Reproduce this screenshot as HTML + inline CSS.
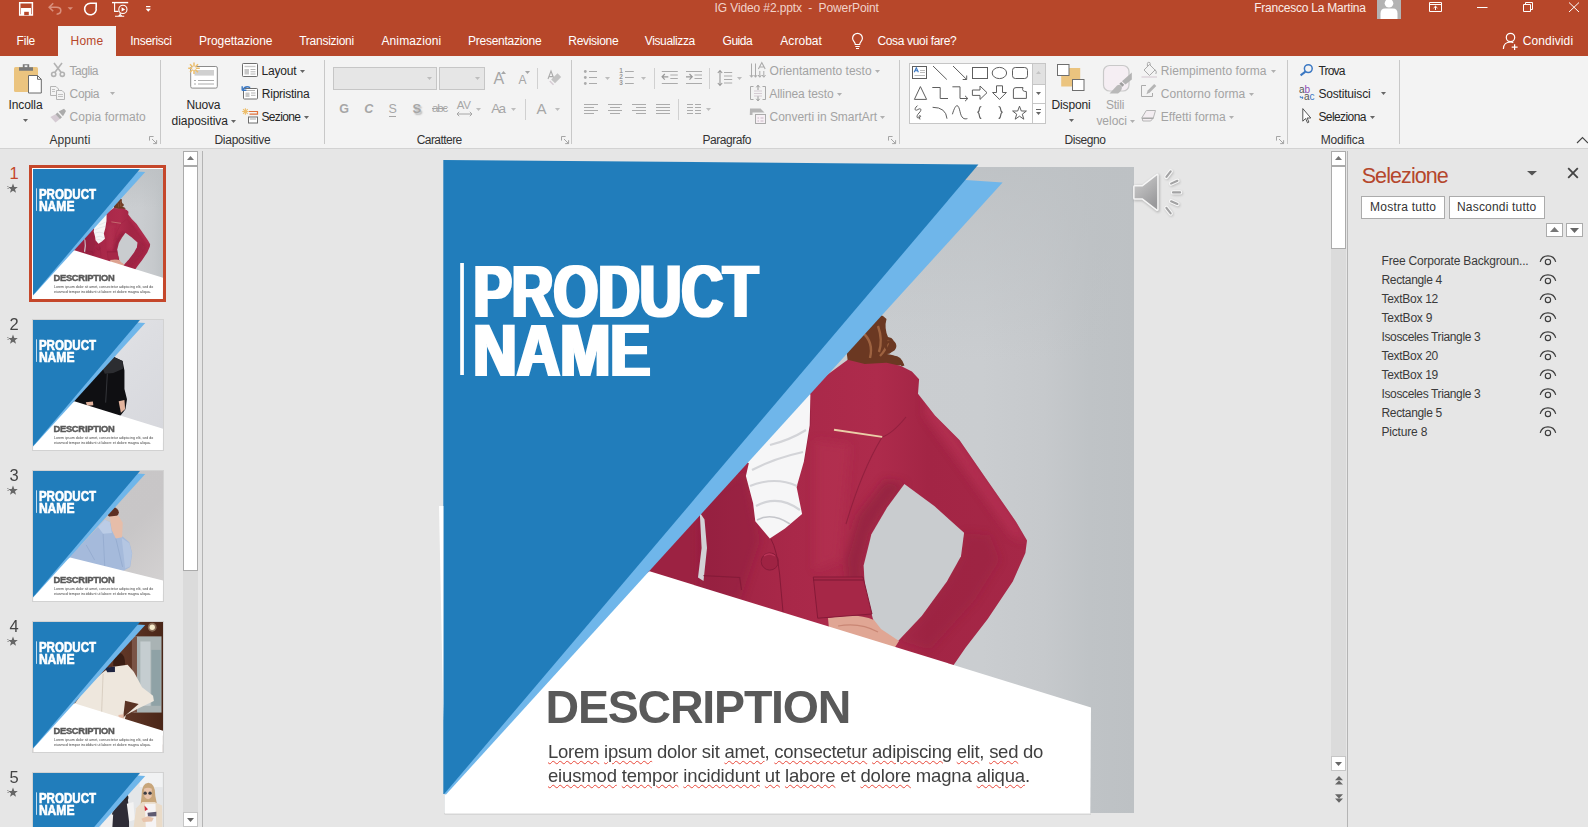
<!DOCTYPE html><html lang="it"><head><meta charset="utf-8"><title>IG Video #2.pptx - PowerPoint</title><style>
html,body{margin:0;padding:0}
body{width:1588px;height:827px;overflow:hidden;background:#E6E6E6;position:relative;font-family:"Liberation Sans",sans-serif}
.a{position:absolute;display:block}
.t{position:absolute;white-space:nowrap;line-height:1;display:block}
svg{overflow:visible}
</style></head><body>
<div class="a" style="left:0px;top:0px;width:1588px;height:56px;background:#B7472A;"></div>
<div class="a" style="left:58px;top:26px;width:58px;height:30px;background:#F3F3F3;"></div>
<span class="t" style="left:16.60px;top:35.02px;font-size:12px;color:#FFFFFF;letter-spacing:-0.212px;">File</span>
<span class="t" style="left:130.30px;top:35.02px;font-size:12px;color:#FFFFFF;letter-spacing:-0.301px;">Inserisci</span>
<span class="t" style="left:199.00px;top:35.02px;font-size:12px;color:#FFFFFF;letter-spacing:-0.046px;">Progettazione</span>
<span class="t" style="left:299.20px;top:35.02px;font-size:12px;color:#FFFFFF;letter-spacing:-0.257px;">Transizioni</span>
<span class="t" style="left:381.40px;top:35.02px;font-size:12px;color:#FFFFFF;letter-spacing:0.134px;">Animazioni</span>
<span class="t" style="left:468.00px;top:35.02px;font-size:12px;color:#FFFFFF;letter-spacing:-0.260px;">Presentazione</span>
<span class="t" style="left:568.30px;top:35.02px;font-size:12px;color:#FFFFFF;letter-spacing:-0.299px;">Revisione</span>
<span class="t" style="left:644.80px;top:35.02px;font-size:12px;color:#FFFFFF;letter-spacing:-0.379px;">Visualizza</span>
<span class="t" style="left:722.50px;top:35.02px;font-size:12px;color:#FFFFFF;letter-spacing:-0.455px;">Guida</span>
<span class="t" style="left:780.30px;top:35.02px;font-size:12px;color:#FFFFFF;letter-spacing:0.041px;">Acrobat</span>
<span class="t" style="left:877.40px;top:35.02px;font-size:12px;color:#FFFFFF;letter-spacing:-0.332px;">Cosa vuoi fare?</span>
<span class="t" style="left:1522.70px;top:35.02px;font-size:12px;color:#FFFFFF;letter-spacing:0.130px;">Condividi</span>
<span class="t" style="left:70.50px;top:35.02px;font-size:12px;color:#B7472A;letter-spacing:0.263px;">Home</span>
<span class="t" style="left:714.60px;top:2.02px;font-size:12px;color:#F1D3CA;letter-spacing:-0.119px;white-space:pre;">IG Video #2.pptx  -  PowerPoint</span>
<span class="t" style="left:1254.20px;top:2.02px;font-size:12px;color:#FBEDE8;letter-spacing:-0.224px;">Francesco La Martina</span>
<svg class="a" style="left:1377px;top:0" width="24" height="19" viewBox="0 0 24 19"><rect width="24" height="19" fill="#B3B3B3"/><circle cx="12" cy="3.2" r="4.3" fill="#fff"/><path d="M3.5 19V13.5Q3.5 8.6 8 8.6H16Q20.5 8.6 20.5 13.5V19Z" fill="#fff"/></svg>
<svg class="a" style="left:0;top:0" width="200" height="26" viewBox="0 0 200 26" fill="none" stroke="#fff" stroke-width="1.3">
<path d="M19.7 2.8H32.4V15H19.7Z" stroke-width="1.5"/><rect x="21" y="8" width="10" height="7" fill="#fff" stroke="none"/><rect x="24.2" y="11.8" width="4.6" height="3.4" fill="#B7472A" stroke="none"/><rect x="20.4" y="11.6" width="2" height="2.8" fill="#B7472A" stroke="none" opacity="0"/>
<g stroke="#D98F7C"><path d="M53.2 3.2L49.2 7.2L53.2 11.2M49.6 7.2H56.6Q60.8 7.2 60.8 10.6Q60.8 14 56.6 14.2" stroke-width="1.6"/><path d="M67.6 7.2H73L70.3 10Z" fill="#D98F7C" stroke="none"/></g>
<path d="M96 7.4A5.8 5.8 0 1 1 90.5 3.2H96.2V7.6" stroke-width="1.6"/>
<path d="M112 2.6H128.2" stroke-width="1.4"/><path d="M114.6 3V11.4H118.6M120.2 12V15.6M115 16.3H124.2M118.6 16.2L120.2 14.6L121.8 16.2" stroke-width="1.1"/><circle cx="122.9" cy="9.4" r="4.1" stroke-width="1.1" fill="#B7472A"/><path d="M121.6 7.2V11.6L125.2 9.4Z" fill="#fff" stroke="none"/>
<path d="M146 6.6H150.4" stroke-width="1.2"/><path d="M145.7 8.7H150.9L148.3 11.8Z" fill="#fff" stroke="none"/>
</svg>
<svg class="a" style="left:1420px;top:0" width="168" height="20" viewBox="1420 0 168 20" fill="none" stroke="#fff" stroke-width="1">
<path d="M1429.5 2.5H1441.5V11.5H1429.5ZM1429.5 4.5H1441.5"/><path d="M1435.5 10V6.3M1433.6 8L1435.5 6.2L1437.4 8"/>
<path d="M1477 7.5H1487.5"/>
<path d="M1523.5 4.5H1530.5V11.5H1523.5ZM1525.5 4.5V2.5H1532.5V9.5H1530.5"/>
<path d="M1569 2.5L1579 12M1579 2.5L1569 12"/>
</svg>
<svg class="a" style="left:850px;top:31px" width="16" height="20" viewBox="850 31 16 20" fill="none" stroke="#fff" stroke-width="1.2">
<path d="M1 1" /><path d="M855.3 44.5C855.3 42 852.6 41.2 852.6 38.2A4.9 4.9 0 0 1 862.4 38.2C862.4 41.2 859.7 42 859.7 44.5Z"/><path d="M855.3 46.5H859.7M856 48.5H859"/></svg>
<svg class="a" style="left:1500px;top:30px" width="20" height="22" viewBox="1500 30 20 22" fill="none" stroke="#fff" stroke-width="1.2">
<circle cx="1510.5" cy="37.5" r="4.2"/><path d="M1503.4 49C1503.4 44.5 1506.5 42 1510.5 42C1511.5 42 1512.5 42.2 1513.3 42.6"/><path d="M1514.6 44.2V50M1511.7 47.1H1517.6"/></svg>
<div class="a" style="left:0px;top:56px;width:1588px;height:92px;background:#F3F3F3;"></div>
<div class="a" style="left:0px;top:148px;width:1588px;height:1px;background:#D2D2D2;"></div>
<div class="a" style="left:160px;top:60px;width:1px;height:84px;background:#C8C8C8;"></div>
<div class="a" style="left:324px;top:60px;width:1px;height:84px;background:#C8C8C8;"></div>
<div class="a" style="left:571px;top:60px;width:1px;height:84px;background:#C8C8C8;"></div>
<div class="a" style="left:899px;top:60px;width:1px;height:84px;background:#C8C8C8;"></div>
<div class="a" style="left:1287px;top:60px;width:1px;height:84px;background:#C8C8C8;"></div>
<div class="a" style="left:1399px;top:60px;width:1px;height:84px;background:#C8C8C8;"></div>
<div class="a" style="left:537px;top:68px;width:1px;height:21px;background:#D0D0D0;"></div>
<div class="a" style="left:654px;top:68px;width:1px;height:21px;background:#D0D0D0;"></div>
<div class="a" style="left:709px;top:68px;width:1px;height:21px;background:#D0D0D0;"></div>
<div class="a" style="left:525px;top:99px;width:1px;height:21px;background:#D0D0D0;"></div>
<div class="a" style="left:678px;top:99px;width:1px;height:21px;background:#D0D0D0;"></div>
<span class="t" style="left:49.40px;top:134.02px;font-size:12px;color:#333;letter-spacing:0.050px;">Appunti</span>
<span class="t" style="left:214.40px;top:134.02px;font-size:12px;color:#333;letter-spacing:-0.249px;">Diapositive</span>
<span class="t" style="left:416.70px;top:134.02px;font-size:12px;color:#333;letter-spacing:-0.553px;">Carattere</span>
<span class="t" style="left:702.60px;top:134.02px;font-size:12px;color:#333;letter-spacing:-0.475px;">Paragrafo</span>
<span class="t" style="left:1064.60px;top:134.02px;font-size:12px;color:#333;letter-spacing:-0.438px;">Disegno</span>
<span class="t" style="left:1320.70px;top:134.02px;font-size:12px;color:#333;letter-spacing:-0.141px;">Modifica</span>
<svg class="a" style="left:149px;top:136px" width="9" height="9" viewBox="0 0 9 9" fill="none" stroke="#9C9C9C" stroke-width="0.9"><path d="M0.5 4.6V0.5H4.6M3 3L7.4 7.4M7.6 4.2V7.6H4.2"/></svg>
<svg class="a" style="left:560.5px;top:136px" width="9" height="9" viewBox="0 0 9 9" fill="none" stroke="#9C9C9C" stroke-width="0.9"><path d="M0.5 4.6V0.5H4.6M3 3L7.4 7.4M7.6 4.2V7.6H4.2"/></svg>
<svg class="a" style="left:888px;top:136px" width="9" height="9" viewBox="0 0 9 9" fill="none" stroke="#9C9C9C" stroke-width="0.9"><path d="M0.5 4.6V0.5H4.6M3 3L7.4 7.4M7.6 4.2V7.6H4.2"/></svg>
<svg class="a" style="left:1276px;top:136px" width="9" height="9" viewBox="0 0 9 9" fill="none" stroke="#9C9C9C" stroke-width="0.9"><path d="M0.5 4.6V0.5H4.6M3 3L7.4 7.4M7.6 4.2V7.6H4.2"/></svg>
<svg class="a" style="left:1576px;top:136px" width="12" height="8" viewBox="0 0 12 8" fill="none" stroke="#444" stroke-width="1.1"><path d="M1 7L6.5 1.5L12 7"/></svg>
<span class="t" style="left:8.60px;top:99.02px;font-size:12px;color:#262626;letter-spacing:-0.115px;">Incolla</span>
<svg class="a" style="left:23px;top:119px" width="5" height="3" viewBox="0 0 5 3"><path d="M0 0H5L2.5 3Z" fill="#666"/></svg>
<span class="t" style="left:69.60px;top:65.02px;font-size:12px;color:#A3A3A3;letter-spacing:-0.491px;">Taglia</span>
<span class="t" style="left:69.60px;top:88.02px;font-size:12px;color:#A3A3A3;letter-spacing:-0.363px;">Copia</span>
<svg class="a" style="left:110px;top:92px" width="5" height="3" viewBox="0 0 5 3"><path d="M0 0H5L2.5 3Z" fill="#B0B0B0"/></svg>
<span class="t" style="left:69.60px;top:111.02px;font-size:12px;color:#A3A3A3;letter-spacing:0.069px;">Copia formato</span>
<svg class="a" style="left:10px;top:60px" width="36" height="36" viewBox="10 60 36 36">
<rect x="14" y="67" width="24" height="25" rx="1.5" fill="#EBC47F"/>
<path d="M19 70.7V67.2H22.8V64.3H29.2V67.2H33V70.7Z" fill="#797979"/><rect x="24.6" y="65.3" width="2.8" height="1.8" fill="#F3F3F3"/>
<path d="M28.5 75.5H37.5L41.3 79.3V93H28.5Z" fill="#fff" stroke="#6a6a6a" stroke-width="1"/><path d="M37.5 75.5V79.3H41.3" fill="none" stroke="#6a6a6a" stroke-width="1"/></svg>
<svg class="a" style="left:50px;top:61px" width="17" height="17" viewBox="50 61 17 17" fill="none" stroke="#B2B2B2" stroke-width="1.6">
<path d="M54 63L61.2 72.6M62 63L54.8 72.6"/><circle cx="53.7" cy="74.3" r="2.1"/><circle cx="62.3" cy="74.3" r="2.1"/></svg>
<svg class="a" style="left:49px;top:84px" width="18" height="18" viewBox="49 84 18 18" fill="#F3F3F3" stroke="#B4B4B4" stroke-width="1">
<path d="M50.5 86.5H56L58.5 89V95.5H50.5Z"/><path d="M56.5 90.5H62L64.5 93V99.5H56.5Z"/><path d="M52 89.5H55M52 91.5H55M58 94.5H63M58 96.5H63" stroke-width="0.8"/></svg>
<svg class="a" style="left:50px;top:108px" width="17" height="16" viewBox="50 108 17 16">
<path d="M50.4 117L56 114L60.5 118.5L55.5 122.6Z" fill="#D5CBD3"/><path d="M57.5 112.5L62 117.3L60 119L55.6 114.2Z" fill="#ABABAB"/><path d="M58.6 111.6L64 108.8L66 111L63 116.2Z" fill="#ABABAB"/></svg>
<span class="t" style="left:186.40px;top:99.02px;font-size:12px;color:#262626;letter-spacing:-0.147px;">Nuova</span>
<span class="t" style="left:171.60px;top:115.02px;font-size:12px;color:#262626;letter-spacing:-0.030px;">diapositiva</span>
<svg class="a" style="left:231px;top:119.5px" width="5" height="3" viewBox="0 0 5 3"><path d="M0 0H5L2.5 3Z" fill="#666"/></svg>
<span class="t" style="left:261.40px;top:65.02px;font-size:12px;color:#262626;letter-spacing:-0.166px;">Layout</span>
<svg class="a" style="left:300px;top:69.5px" width="5" height="3" viewBox="0 0 5 3"><path d="M0 0H5L2.5 3Z" fill="#666"/></svg>
<span class="t" style="left:261.80px;top:88.02px;font-size:12px;color:#262626;letter-spacing:-0.246px;">Ripristina</span>
<span class="t" style="left:261.40px;top:111.02px;font-size:12px;color:#262626;letter-spacing:-0.628px;">Sezione</span>
<svg class="a" style="left:304.3px;top:115.5px" width="5" height="3" viewBox="0 0 5 3"><path d="M0 0H5L2.5 3Z" fill="#666"/></svg>
<svg class="a" style="left:186px;top:60px" width="34" height="30" viewBox="186 60 34 30">
<rect x="190.7" y="66.5" width="26.6" height="21.6" rx="1.5" fill="#fff" stroke="#8C8C8C" stroke-width="1"/>
<rect x="194.5" y="70" width="19.5" height="5.6" fill="#D0D0D0"/><path d="M194 80.5H196M198 80.5H214M194 84H196M198 84H214" stroke="#ABABAB" stroke-width="1"/>
<g stroke="#EDBE6B" stroke-width="1.5"><path d="M194 62.5V74M188.2 68.2H199.8M190 64.2L198 72.2M198 64.2L190 72.2"/></g><circle cx="194" cy="68.2" r="1.9" fill="#F3F3F3"/></svg>
<svg class="a" style="left:241px;top:62px" width="18" height="16" viewBox="241 62 18 16">
<rect x="242.5" y="63.5" width="15" height="13" rx="0.8" fill="#fff" stroke="#6E6E6E"/><path d="M244.5 66.5H255.5" stroke="#C8C8C8" stroke-width="1.4"/><rect x="244.5" y="69" width="4.5" height="5.5" fill="#C8C8C8"/><path d="M250.5 69.5H255.5M250.5 71.8H255.5M250.5 74H255.5" stroke="#ABABAB" stroke-width="0.9"/></svg>
<svg class="a" style="left:241px;top:84px" width="18" height="17" viewBox="241 84 18 17">
<rect x="243.5" y="88.5" width="14" height="10.5" rx="0.8" fill="#fff" stroke="#6E6E6E"/><rect x="245.5" y="92.5" width="4" height="4.5" fill="#C8C8C8"/><path d="M251 93H255.5M251 95.3H255.5M246 90.5H255" stroke="#ABABAB" stroke-width="0.9"/>
<path d="M242.2 90.5V86.3M242.2 90.3H246.4" stroke="#3B78C3" stroke-width="1.4" fill="none"/><path d="M242.8 89.8Q245.5 85.3 250.2 87.6" stroke="#3B78C3" stroke-width="1.5" fill="none"/><rect x="246.5" y="86" width="6" height="2.3" fill="#F3F3F3" opacity="0"/></svg>
<svg class="a" style="left:241px;top:107px" width="18" height="18" viewBox="241 107 18 18">
<g stroke="#EDBE6B" stroke-width="1.1"><path d="M245.4 108.3V114.7M242.2 111.5H248.6M243.1 109.2L247.7 113.8M247.7 109.2L243.1 113.8"/></g>
<path d="M249 111.5H257.5V114.2H249.5" fill="none" stroke="#E0723C" stroke-width="1.2"/>
<rect x="248.5" y="117" width="9" height="6" fill="#fff" stroke="#6E6E6E"/><path d="M250 119H256" stroke="#C8C8C8" stroke-width="1.6"/></svg>
<div class="a" style="left:333px;top:67px;width:103.5px;height:22.5px;background:#E6E6E6;border:1px solid #C6C6C6;box-sizing:border-box;"></div>
<div class="a" style="left:439px;top:67px;width:46px;height:22.5px;background:#E6E6E6;border:1px solid #C6C6C6;box-sizing:border-box;"></div>
<svg class="a" style="left:427px;top:77px" width="5" height="3" viewBox="0 0 5 3"><path d="M0 0H5L2.5 3Z" fill="#BDBDBD"/></svg>
<svg class="a" style="left:475px;top:77px" width="5" height="3" viewBox="0 0 5 3"><path d="M0 0H5L2.5 3Z" fill="#BDBDBD"/></svg>
<span class="t" style="left:493.50px;top:70.52px;font-size:16px;color:#A6A6A6;letter-spacing:0.328px;">A</span>
<svg class="a" style="left:501px;top:70.5px" width="5" height="3"><path d="M0 3H5L2.5 0Z" fill="#A6A6A6"/></svg>
<span class="t" style="left:518.60px;top:74.02px;font-size:12px;color:#A6A6A6;letter-spacing:-0.304px;">A</span>
<svg class="a" style="left:525px;top:71px" width="5" height="3" viewBox="0 0 5 3"><path d="M0 0H5L2.5 3Z" fill="#A6A6A6"/></svg>
<svg class="a" style="left:546px;top:69px" width="17" height="18" viewBox="546 69 17 18">
<path d="M548 79L551 71L554 79M549 76.6H553" fill="none" stroke="#ABABAB" stroke-width="1.1"/><path d="M557.5 73.2L561.2 77L555 83.2L551.2 79.5Z" fill="#C3C3C3"/><path d="M550.3 80.6L554 84.3L553 85.3L549.3 81.6Z" fill="#D5CBD3"/></svg>
<span class="t" style="left:339.30px;top:102.77px;font-size:12.5px;color:#A6A6A6;letter-spacing:-1.023px;font-weight:bold;">G</span>
<span class="t" style="left:364.30px;top:102.77px;font-size:12.5px;color:#A6A6A6;letter-spacing:-0.927px;font-weight:bold;font-style:italic;">C</span>
<span class="t" style="left:388.60px;top:102.77px;font-size:12.5px;color:#A6A6A6;letter-spacing:-1.338px;border-bottom:1px solid #A6A6A6;padding-bottom:0.5px;">S</span>
<span class="t" style="left:412.60px;top:102.02px;font-size:13px;color:#A6A6A6;letter-spacing:-0.771px;font-weight:bold;text-shadow:1.5px 1.5px 1.5px #bbb;">S</span>
<span class="t" style="left:432.00px;top:103.27px;font-size:11.5px;color:#A6A6A6;letter-spacing:-1.171px;text-decoration:line-through;">abc</span>
<span class="t" style="left:456.70px;top:100.27px;font-size:11.5px;color:#A6A6A6;letter-spacing:-0.187px;">AV</span>
<svg class="a" style="left:456px;top:111px" width="17" height="6" viewBox="0 0 17 6" fill="none" stroke="#A6A6A6" stroke-width="1"><path d="M1 3H16M3.2 0.8L1 3L3.2 5.2M13.8 0.8L16 3L13.8 5.2"/></svg>
<svg class="a" style="left:476px;top:108px" width="5" height="3" viewBox="0 0 5 3"><path d="M0 0H5L2.5 3Z" fill="#BDBDBD"/></svg>
<span class="t" style="left:491.30px;top:101.77px;font-size:13.5px;color:#A6A6A6;letter-spacing:-1.713px;">Aa</span>
<svg class="a" style="left:511px;top:108px" width="5" height="3" viewBox="0 0 5 3"><path d="M0 0H5L2.5 3Z" fill="#BDBDBD"/></svg>
<span class="t" style="left:536.50px;top:101.02px;font-size:15px;color:#A6A6A6;letter-spacing:-0.505px;">A</span>
<svg class="a" style="left:555px;top:108px" width="5" height="3" viewBox="0 0 5 3"><path d="M0 0H5L2.5 3Z" fill="#BDBDBD"/></svg>
<svg class="a" style="left:580px;top:60px" width="170" height="66" viewBox="580 60 170 66"><circle cx="585.3" cy="71.5" r="1.4" fill="#ABABAB"/><path d="M589 71.5H597" stroke="#ABABAB" stroke-width="1"/><circle cx="585.3" cy="77.5" r="1.4" fill="#ABABAB"/><path d="M589 77.5H597" stroke="#ABABAB" stroke-width="1"/><circle cx="585.3" cy="83.5" r="1.4" fill="#ABABAB"/><path d="M589 83.5H597" stroke="#ABABAB" stroke-width="1"/><path d="M625 71.5H633.8" stroke="#ABABAB" stroke-width="1"/><path d="M625 77.5H633.8" stroke="#ABABAB" stroke-width="1"/><path d="M625 83.5H633.8" stroke="#ABABAB" stroke-width="1"/></svg>
<span class="t" style="left:619.30px;top:68.27px;font-size:6.5px;color:#999;letter-spacing:0.000px;font-weight:bold;">1</span>
<span class="t" style="left:619.30px;top:74.27px;font-size:6.5px;color:#999;letter-spacing:0.000px;font-weight:bold;">2</span>
<span class="t" style="left:619.30px;top:80.27px;font-size:6.5px;color:#999;letter-spacing:0.000px;font-weight:bold;">3</span>
<svg class="a" style="left:605px;top:77px" width="5" height="3" viewBox="0 0 5 3"><path d="M0 0H5L2.5 3Z" fill="#BDBDBD"/></svg>
<svg class="a" style="left:641px;top:77px" width="5" height="3" viewBox="0 0 5 3"><path d="M0 0H5L2.5 3Z" fill="#BDBDBD"/></svg>
<svg class="a" style="left:580px;top:60px" width="170" height="66" viewBox="580 60 170 66"><path d="M661.8 71.5H677.8M670.3 75H677.8M670.3 78.5H677.8M661.8 83.5H677.8" stroke="#ABABAB" stroke-width="1" fill="none"/><path d="M662.0999999999999 76.8H668.3M664.8 74L662.0999999999999 76.8L664.8 79.6" stroke="#999" stroke-width="1.2" fill="none"/><path d="M686 71.5H702M694.5 75H702M694.5 78.5H702M686 83.5H702" stroke="#ABABAB" stroke-width="1" fill="none"/><path d="M686 76.8H692.2M689.5 74L692.2 76.8L689.5 79.6" stroke="#999" stroke-width="1.2" fill="none"/><path d="M724 72.5H732.2M724 76H732.2M724 79.5H732.2M724 83H732.2" stroke="#ABABAB" stroke-width="1"/><path d="M720 70.5V85.5M717.8 73L720 70.5L722.2 73M717.8 83L720 85.5L722.2 83" stroke="#999" stroke-width="1.1" fill="none"/><path d="M584 104.5H598M584 107.5H594M584 110.5H598M584 113.5H594" stroke="#ABABAB" stroke-width="1" fill="none"/><path d="M608 104.5H622M610 107.5H620M608 110.5H622M610 113.5H620" stroke="#ABABAB" stroke-width="1" fill="none"/><path d="M632 104.5H646M636 107.5H646M632 110.5H646M636 113.5H646" stroke="#ABABAB" stroke-width="1" fill="none"/><path d="M656 104.5H670M656 107.5H670M656 110.5H670M656 113.5H670" stroke="#ABABAB" stroke-width="1" fill="none"/><path d="M687 104.5H693M687 107.5H693M687 110.5H693M687 113.5H693" stroke="#ABABAB" stroke-width="1" fill="none"/><path d="M695 104.5H701M695 107.5H701M695 110.5H701M695 113.5H701" stroke="#ABABAB" stroke-width="1" fill="none"/></svg>
<svg class="a" style="left:737px;top:77px" width="5" height="3" viewBox="0 0 5 3"><path d="M0 0H5L2.5 3Z" fill="#BDBDBD"/></svg>
<svg class="a" style="left:706px;top:108px" width="5" height="3" viewBox="0 0 5 3"><path d="M0 0H5L2.5 3Z" fill="#BDBDBD"/></svg>
<span class="t" style="left:769.60px;top:65.02px;font-size:12px;color:#A3A3A3;letter-spacing:-0.003px;">Orientamento testo</span>
<svg class="a" style="left:875px;top:69.5px" width="5" height="3" viewBox="0 0 5 3"><path d="M0 0H5L2.5 3Z" fill="#B0B0B0"/></svg>
<span class="t" style="left:769.30px;top:88.02px;font-size:12px;color:#A3A3A3;letter-spacing:-0.089px;">Allinea testo</span>
<svg class="a" style="left:837px;top:92.5px" width="5" height="3" viewBox="0 0 5 3"><path d="M0 0H5L2.5 3Z" fill="#B0B0B0"/></svg>
<span class="t" style="left:769.60px;top:111.02px;font-size:12px;color:#A3A3A3;letter-spacing:-0.033px;">Converti in SmartArt</span>
<svg class="a" style="left:880.3px;top:115.5px" width="5" height="3" viewBox="0 0 5 3"><path d="M0 0H5L2.5 3Z" fill="#B0B0B0"/></svg>
<svg class="a" style="left:749px;top:61px" width="19" height="65" viewBox="749 61 19 65" fill="none" stroke="#ABABAB" stroke-width="1">
<path d="M751.5 63.5V77M749.8 75L751.5 77.3L753.2 75M755.5 63.5V77M753.8 75L755.5 77.3L757.2 75M759.8 71V77M758.1 75L759.8 77.3L761.5 75M763.8 71V77M762.1 75L763.8 77.3L765.5 75"/>
<path d="M758.4 69L761.8 62.6L765.2 69M759.6 67H764" stroke-width="1.1"/>
<path d="M753.5 86.5H750.5V99.5H753.5M762.5 86.5H765.5V99.5H762.5" stroke="#A9A9A9"/><path d="M754 91H762M754 93.5H762M754 96H762" stroke="#D5CBD3"/>
<path d="M758 85.4V90M756.3 87.3L758 85.3L759.7 87.3M758 100.8V96.3M756.3 98.8L758 100.8L759.7 98.8" stroke="#999"/>
<path d="M750 108.5H760.5L764.5 112.5H752.5V115L749.8 115Z" fill="#B5B5B5" stroke="none"/>
<rect x="755.5" y="114.5" width="10" height="9" fill="#F7F0F5" stroke="#ABABAB"/><path d="M757.5 118H759M760.5 118H763.5M757.5 121H759M760.5 121H763.5" stroke="#C9B9C6"/></svg>
<div class="a" style="left:909px;top:62.5px;width:137px;height:61.5px;background:#fff;border:1px solid #C6C6C6;box-sizing:border-box;"></div>
<div class="a" style="left:1031.5px;top:62.5px;width:1px;height:61.5px;background:#C6C6C6;"></div>
<div class="a" style="left:1032.5px;top:63.5px;width:12.5px;height:20px;background:#E1E1E1;"></div>
<div class="a" style="left:1031.5px;top:83.5px;width:14px;height:1px;background:#C6C6C6;"></div>
<div class="a" style="left:1031.5px;top:102.5px;width:14px;height:1px;background:#C6C6C6;"></div>
<svg class="a" style="left:1036px;top:70.5px" width="5" height="3"><path d="M0 3H5L2.5 0Z" fill="#C4C4C4"/></svg>
<svg class="a" style="left:1036px;top:91.5px" width="5" height="3" viewBox="0 0 5 3"><path d="M0 0H5L2.5 3Z" fill="#666"/></svg>
<svg class="a" style="left:1036px;top:111.5px" width="5" height="3" viewBox="0 0 5 3"><path d="M0 0H5L2.5 3Z" fill="#666"/></svg>
<div class="a" style="left:1036px;top:108.5px;width:5px;height:1px;background:#666;"></div>
<svg class="a" style="left:909px;top:62px" width="124" height="62" viewBox="909 62 124 62" fill="none" stroke="#5E5E5E" stroke-width="1">
<rect x="912.5" y="66.5" width="14" height="12" fill="#fff"/><path d="M920 70.5H925M920 72.5H925M914.5 75.5H925" stroke="#ABABAB" stroke-width="0.8"/>
<path d="M914.2 72.3L916.3 67.8L918.4 72.3M915 70.8H917.6" stroke="#3B78C3" stroke-width="1.1"/>
<path d="M933 66L946.8 79.5"/><path d="M953 66L966.5 79.3M966.7 75.5V79.5H962.7"/>
<rect x="972.5" y="67.5" width="15" height="11"/><ellipse cx="999.4" cy="73" rx="7.2" ry="5.6"/><rect x="1012.5" y="67.5" width="15" height="11" rx="2.8"/>
<path d="M914.4 99.4L920.4 86.6L926.6 99.4Z"/><path d="M932.3 87.5H940.2V98.5H948"/><path d="M952.4 86.8H960V98.5H967.6M965 95.8L967.8 98.5L965 101.2"/>
<path d="M972.4 90H980V86L987 92.7L980 99.4V95.4H972.4Z"/><path d="M996.5 85.8H1002.5V92.5H1006.4L999.5 99.4L992.5 92.5H996.5Z"/>
<path d="M1013.4 98.4V90Q1013.4 87.6 1016 87.6H1023Q1021.2 91.4 1026.4 91.6V98.4Z"/>
<path d="M917.5 105.6C913.5 109 915 111.5 918 109.5C921.5 107.3 921.8 110.5 919 113C916 116 916.5 119 919.5 117.6C921.8 116.4 920 114.5 919 116.2L920 119.5" stroke-width="1"/>
<path d="M932.6 107.3Q946 107.3 947 118.7"/><path d="M952.4 114.3C956 102 958.5 104.5 960 111.5C961.5 118.5 964 119.5 967.4 118.6"/>
<path d="M981.3 106.5C978 106.5 980.6 112 977.4 112.2C980.6 112.4 978 118.5 981.3 118.5M998.6 106.5C1002 106.5 999.4 112 1002.6 112.2C999.4 112.4 1002 118.5 998.6 118.5" stroke-width="1.1"/>
<path d="M1019.5 106.2L1021.3 111H1026.4L1022.3 114.2L1023.8 119.2L1019.5 116.2L1015.2 119.2L1016.7 114.2L1012.6 111H1017.7Z"/>
</svg>
<svg class="a" style="left:1055px;top:62px" width="32" height="30" viewBox="1055 62 32 30">
<rect x="1061.2" y="68" width="19" height="18.5" fill="#EBC47F"/><rect x="1057.5" y="64.5" width="11.5" height="11" fill="#fff" stroke="#6E6E6E"/><rect x="1072.5" y="79.5" width="11.5" height="11" fill="#fff" stroke="#6E6E6E"/></svg>
<span class="t" style="left:1051.60px;top:99.02px;font-size:12px;color:#262626;letter-spacing:-0.170px;">Disponi</span>
<svg class="a" style="left:1069px;top:119px" width="5" height="3" viewBox="0 0 5 3"><path d="M0 0H5L2.5 3Z" fill="#666"/></svg>
<svg class="a" style="left:1100px;top:62px" width="34" height="34" viewBox="1100 62 34 34">
<rect x="1103.5" y="65.5" width="25.5" height="25.5" rx="6" fill="#F5EEF3" stroke="#C9C9C9" stroke-width="1.2"/>
<path d="M1109.5 93.5L1117 85.5Q1120 83.5 1121.8 86.4Q1122.4 90.5 1118 93.5Z" fill="#B9B9B9"/><path d="M1119.3 83.8L1121.2 82L1124.2 84.7L1122.6 86.7Z" fill="#9E9E9E"/><path d="M1122 81.2L1131.8 72.4V79.5L1125.4 84.5Z" fill="#B3B3B3"/></svg>
<span class="t" style="left:1106.00px;top:99.02px;font-size:12px;color:#A3A3A3;letter-spacing:-0.234px;">Stili</span>
<span class="t" style="left:1096.40px;top:115.02px;font-size:12px;color:#A3A3A3;letter-spacing:-0.016px;">veloci</span>
<svg class="a" style="left:1130px;top:119.5px" width="5" height="3" viewBox="0 0 5 3"><path d="M0 0H5L2.5 3Z" fill="#B0B0B0"/></svg>
<span class="t" style="left:1160.70px;top:65.02px;font-size:12px;color:#A3A3A3;letter-spacing:0.069px;">Riempimento forma</span>
<svg class="a" style="left:1270.5px;top:69.5px" width="5" height="3" viewBox="0 0 5 3"><path d="M0 0H5L2.5 3Z" fill="#B0B0B0"/></svg>
<span class="t" style="left:1160.70px;top:88.02px;font-size:12px;color:#A3A3A3;letter-spacing:0.094px;">Contorno forma</span>
<svg class="a" style="left:1249px;top:92.5px" width="5" height="3" viewBox="0 0 5 3"><path d="M0 0H5L2.5 3Z" fill="#B0B0B0"/></svg>
<span class="t" style="left:1160.70px;top:111.02px;font-size:12px;color:#A3A3A3;letter-spacing:0.036px;">Effetti forma</span>
<svg class="a" style="left:1229.3px;top:115.5px" width="5" height="3" viewBox="0 0 5 3"><path d="M0 0H5L2.5 3Z" fill="#B0B0B0"/></svg>
<svg class="a" style="left:1140px;top:60px" width="20" height="66" viewBox="1140 60 20 66" fill="none" stroke="#ABABAB" stroke-width="1">
<path d="M1144 70L1149.5 64.5L1155 70L1149.5 75.5Z"/><path d="M1147.4 66.3V63.5Q1147.4 62.3 1148.8 62.3Q1150.2 62.3 1150.2 63.5V65.2"/><path d="M1155 69.5Q1157.3 72 1155.8 74" />
<rect x="1141.5" y="76" width="15.5" height="2" fill="#E3DCE1" stroke="none"/>
<path d="M1146 85.5H1141.5V96.5H1152.5V93"/><path d="M1146.5 94.2L1147.7 90.4L1154.2 84L1156.3 86.1L1149.8 92.6Z" fill="#B5B5B5" stroke="none"/>
<path d="M1142 117.5L1146.3 110.5H1155.5L1153.3 118L1150.7 121H1142.8Z" fill="#F3EDF1" stroke="#B5B5B5"/><path d="M1141.8 118.3H1150.5L1153.4 118.2" stroke="#A8A8A8" stroke-width="1.6"/></svg>
<span class="t" style="left:1318.40px;top:65.02px;font-size:12px;color:#262626;letter-spacing:-0.782px;">Trova</span>
<span class="t" style="left:1318.40px;top:88.02px;font-size:12px;color:#262626;letter-spacing:-0.172px;">Sostituisci</span>
<svg class="a" style="left:1380.8px;top:92.3px" width="5" height="3" viewBox="0 0 5 3"><path d="M0 0H5L2.5 3Z" fill="#666"/></svg>
<span class="t" style="left:1318.40px;top:111.02px;font-size:12px;color:#262626;letter-spacing:-0.576px;">Seleziona</span>
<svg class="a" style="left:1370.2px;top:115.5px" width="5" height="3" viewBox="0 0 5 3"><path d="M0 0H5L2.5 3Z" fill="#666"/></svg>
<svg class="a" style="left:1298px;top:62px" width="18" height="64" viewBox="1298 62 18 64" fill="none">
<circle cx="1308.3" cy="68.6" r="3.9" stroke="#3B78C3" stroke-width="1.5"/><path d="M1305.4 71.6L1300.6 75.4" stroke="#3B78C3" stroke-width="2"/>
<path d="M1300.3 96V97.6H1303M1301.8 96.4L1303.2 97.7L1301.8 99" stroke="#3B78C3" stroke-width="0.9"/>
<path d="M1302.8 108.6V121.2L1305.6 118.5L1307.5 122.8L1308.9 122.1L1307.1 118H1310.8Z" fill="#fff" stroke="#444" stroke-width="0.9"/></svg>
<span class="t" style="left:1299.00px;top:84.52px;font-size:10px;color:#555;letter-spacing:0.038px;">a</span>
<span class="t" style="left:1304.60px;top:84.52px;font-size:10px;color:#8E4DB5;letter-spacing:0.038px;">b</span>
<span class="t" style="left:1304.00px;top:91.52px;font-size:10px;color:#555;letter-spacing:-0.062px;">a</span>
<span class="t" style="left:1309.50px;top:91.52px;font-size:10px;color:#3B78C3;letter-spacing:0.300px;">c</span>
<div class="a" style="left:183px;top:151px;width:15px;height:676px;background:#DBDBDB;"></div>
<div class="a" style="left:183px;top:151px;width:15px;height:15px;background:#fff;border:1px solid #ABABAB;box-sizing:border-box;"></div>
<svg class="a" style="left:187px;top:156px" width="7" height="4"><path d="M0 4H7L3.5 0Z" fill="#777"/></svg>
<div class="a" style="left:183px;top:166px;width:15px;height:405px;background:#fff;border:1px solid #ABABAB;box-sizing:border-box;"></div>
<div class="a" style="left:183px;top:812px;width:15px;height:15px;background:#fff;border:1px solid #C6C6C6;box-sizing:border-box;"></div>
<svg class="a" style="left:187px;top:818px" width="7" height="4"><path d="M0 0H7L3.5 4Z" fill="#666"/></svg>
<div class="a" style="left:202px;top:151px;width:1px;height:676px;background:#B4B4B4;"></div>
<span class="t" style="left:9.50px;top:164.77px;font-size:16.5px;color:#C5472B;letter-spacing:0.000px;">1</span>
<svg class="a" style="left:7px;top:182.7px" width="11" height="11" viewBox="0 0 11 11"><path d="M6 0.5L7.3 4.1H10.8L8 6.3L9 9.8L6 7.7L3 9.8L4 6.3L1.2 4.1H4.7Z" fill="#666"/><path d="M0 3.5H1.6M0.3 5.5H2" stroke="#888" stroke-width=".7"/></svg>
<div class="a" style="left:29px;top:165px;width:137px;height:137px;background:#C5472B;"></div>
<div class="a" style="left:32px;top:168px;width:131px;height:131px;background:#fff;"></div>
<svg class="a" style="left:33px;top:169.00px;overflow:hidden" width="130" height="130.00" viewBox="444 167 647 646.00" preserveAspectRatio="none">
<rect x="444" y="167" width="647" height="646" fill="#fff"/>
<defs><linearGradient id="t0bg" x1="444" x2="1134" y1="0" y2="0" gradientUnits="userSpaceOnUse"><stop offset="0" stop-color="#CDD0D3"/><stop offset="0.78" stop-color="#CACDD0"/><stop offset="0.87" stop-color="#C6C9CC"/><stop offset="0.935" stop-color="#BFC3C6"/><stop offset="1" stop-color="#BDC1C4"/></linearGradient><linearGradient id="t0bgt" x1="0" x2="0" y1="167" y2="360" gradientUnits="userSpaceOnUse"><stop offset="0" stop-color="#BDC1C4" stop-opacity=".85"/><stop offset="1" stop-color="#BDC1C4" stop-opacity="0"/></linearGradient><linearGradient id="t0jk" x1="690" x2="1030" y1="0" y2="0" gradientUnits="userSpaceOnUse"><stop offset="0" stop-color="#9C2242"/><stop offset="0.3" stop-color="#A92849"/><stop offset="0.55" stop-color="#AE2B4C"/><stop offset="0.7" stop-color="#A32545"/><stop offset="1" stop-color="#A62747"/></linearGradient><filter id="t0bl" x="-20%" y="-20%" width="140%" height="140%"><feGaussianBlur stdDeviation="4"/></filter><clipPath id="t0jc"><path d="M600 640L700 480L800 395L847.7 359.8L864.7 364L886.5 362.7L901 365.9L911.9 371.5L919.1 379.2L918 393.7L934.9 415.5L959.4 440L987.7 480.9L1016 521.7L1027 540.6L1025.4 553.1L1012.8 581.4L987.7 619.1L965.7 647.4L951.6 668L900 700L600 700Z"/></clipPath></defs><rect x="444" y="167" width="690" height="646" fill="url(#t0bg)"/><rect x="444" y="167" width="690" height="200" fill="url(#t0bgt)"/><path d="M840 300L883 316L886.5 319Q884 328 888 337Q896 338 894 348Q892 354 887 354Q898 355 904 365L886 367L848 363Z" fill="#6B3822"/><path d="M862 332Q874 342 870 358M878 326Q883 340 879 352M889 340Q886 350 880 356" stroke="#A66A45" stroke-width="2.4" fill="none" opacity=".85"/><circle cx="890.5" cy="346" r="4.6" fill="none" stroke="#6B3822" stroke-width="2.6"/><path d="M892 357Q900 356 903 366" stroke="#6B3822" stroke-width="3" fill="none"/><path d="M600 640L700 480L800 395L847.7 359.8L864.7 364L886.5 362.7L901 365.9L911.9 371.5L919.1 379.2L918 393.7L934.9 415.5L959.4 440L987.7 480.9L1016 521.7L1027 540.6L1025.4 553.1L1012.8 581.4L987.7 619.1L965.7 647.4L951.6 668L900 700L600 700Z" fill="url(#t0jk)"/><g clip-path="url(#t0jc)"><g filter="url(#t0bl)"><path d="M905 484L887 507L871 534L863 566L865 591L873 619L850 615L845 560L858 515L885 480Z" fill="#861B39" opacity=".55"/><path d="M964 533L961 556L947 581L922 616L898 640L930 650L975 600L1000 560L990 535Z" fill="#8A1D3B" opacity=".25"/><path d="M925 390L960 440L1016 521L1027 541L1012 536L965 470L925 415Z" fill="#BE3659" opacity=".55"/><path d="M700 500L745 470L760 540L740 600L700 600Z" fill="#8A1D3B" opacity=".35"/><path d="M815 440L850 445L840 560L815 570Z" fill="#B83254" opacity=".45"/></g></g><path d="M904.4 484L934.3 506L964.1 532.7L961 556.3L946.9 581.4L921.7 616L898.1 641L879.3 633L873 619.1L865.1 590.8L863.6 565.7L871.4 534.3L887.1 507.6Z" fill="#C9CCCF"/><path d="M828 618Q856 612 874 620L881 629L899 641L890 655L830 640Z" fill="#E0A694"/><path d="M838 626Q860 622 878 632" stroke="#C98674" stroke-width="1.2" fill="none"/><path d="M882.2 437Q892 434 906 417M882.2 437Q862 470 846 524" stroke="#8A1D3B" stroke-width="1.1" fill="none" opacity=".75"/><path d="M810 400L810 425L804 461" stroke="#8A1D3B" stroke-width="1" fill="none" opacity=".6"/><path d="M834 429.8L882.2 436.9" stroke="#EBCFA8" stroke-width="1.9"/><path d="M735 455L800 385L810.4 394.4L809.7 425.3L803.9 461.5L796.6 486.9L802.1 514.1L785 528.6L769.8 538.4L755.3 521.3L753.1 503.2L745.9 476L748.8 463.3Z" fill="#F6F6F7"/><path d="M752 470Q775 458 803 452M750 486Q775 476 797 486M756 506Q778 494 800 510M770 445Q790 440 806 430" stroke="#D3D4D8" stroke-width="2.2" fill="none"/><path d="M757 520Q772 512 790 524" stroke="#C5C6CB" stroke-width="1.6" fill="none"/><path d="M699.8 512.5L704.5 519.5L707 548L703.5 581L698 577.5L701.6 548Z" fill="#D2D2D6"/><circle cx="769.8" cy="561.5" r="8.6" fill="#9F2343" stroke="#861B39" stroke-width="1"/><path d="M764 556Q769 552 775 556" stroke="#B93457" stroke-width="1.3" fill="none"/><path d="M813.3 577L863 577L872 614L817.7 618.2Z" fill="#A62747" stroke="#851A38" stroke-width="1"/><path d="M813.3 580L863.5 580" stroke="#7F1835" stroke-width="1.6" opacity=".7"/><path d="M703.5 575.7L739.7 577.5L741.5 590" fill="none" stroke="#851A38" stroke-width="1.2"/><path d="M771 539Q777 550 779.6 574L783.2 614" stroke="#851A38" stroke-width="1" fill="none"/>
<path d="M649.6 571.3L1091 707.4L1090.3 813.4L444.5 813.4L444.5 700Z" fill="#fff"/><path d="M880 174.2L1002.6 182.5L446 794.6L444 794Z" fill="#6FB6EA"/><path d="M443.3 160L978.4 164.5L444.2 794L443.3 794Z" fill="#217DBB"/><rect x="460.2" y="263" width="3.7" height="112" fill="#fff"/><filter id="hvt0" x="-5%" y="-5%" width="110%" height="110%"><feMorphology operator="dilate" radius="2.1 0.2"/></filter><g stroke="#fff" stroke-width="3.4" fill="#fff" style="font-family:'Liberation Sans',sans-serif;font-weight:bold;font-size:75px"><text transform="translate(473.4 317) scale(0.768 1)">PRODUCT</text><text transform="translate(473.3 375.8) scale(0.802 1)">NAME</text></g><text x="545.5" y="723.2" style="font-family:'Liberation Sans',sans-serif;font-weight:bold;font-size:46.5px;letter-spacing:-1.19px" fill="#595959" stroke="#595959" stroke-width="2.2">DESCRIPTION</text>
<text x="548" y="758" style="font-family:'Liberation Sans',sans-serif;font-size:17px" fill="#444" textLength="495" lengthAdjust="spacingAndGlyphs">Lorem ipsum dolor sit amet, consectetur adipiscing elit, sed do</text>
<text x="548" y="781.5" style="font-family:'Liberation Sans',sans-serif;font-size:17px" fill="#444" textLength="482" lengthAdjust="spacingAndGlyphs">eiusmod tempor incididunt ut labore et dolore magna aliqua.</text>
</svg>
<span class="t" style="left:9.50px;top:315.77px;font-size:16.5px;color:#444;letter-spacing:0.000px;">2</span>
<svg class="a" style="left:7px;top:333.7px" width="11" height="11" viewBox="0 0 11 11"><path d="M6 0.5L7.3 4.1H10.8L8 6.3L9 9.8L6 7.7L3 9.8L4 6.3L1.2 4.1H4.7Z" fill="#666"/><path d="M0 3.5H1.6M0.3 5.5H2" stroke="#888" stroke-width=".7"/></svg>
<div class="a" style="left:32px;top:319px;width:132px;height:132px;background:#D2D2D2;"></div>
<svg class="a" style="left:33px;top:320.00px;overflow:hidden" width="130" height="130.00" viewBox="444 167 647 646.00" preserveAspectRatio="none">
<rect x="444" y="167" width="647" height="646" fill="#fff"/>
<defs><linearGradient id="t1bg2" x1="444" x2="1091" y1="167" y2="813" gradientUnits="userSpaceOnUse"><stop offset="0" stop-color="#E8E8EB"/><stop offset="0.5" stop-color="#DDDEE2"/><stop offset="1" stop-color="#D6D7DC"/></linearGradient></defs><rect x="444" y="167" width="690" height="646" fill="url(#t1bg2)"/><g transform="translate(430.56 139.91) scale(0.8427 0.8414)"><path d="M200 560L300 440L420 300L490 248L545 275L556 330L556 440L571 500L562 560L532 597L260 640Z" fill="#0F0F12"/><path d="M420 300L490 250L545 275L548 320L490 345L440 350Z" fill="#2C2D31"/><path d="M455 350L445 520" stroke="#3A3B40" stroke-width="5" fill="none"/><path d="M522 512L556 505L560 560L535 580Z" fill="#E3B49E"/><path d="M328 518L370 514L372 535L335 538Z" fill="#E3B49E"/></g>
<path d="M649.6 571.3L1091 707.4L1090.3 813.4L444.5 813.4L444.5 700Z" fill="#fff"/><path d="M880 174.2L1002.6 182.5L446 794.6L444 794Z" fill="#6FB6EA"/><path d="M443.3 160L978.4 164.5L444.2 794L443.3 794Z" fill="#217DBB"/><rect x="460.2" y="263" width="3.7" height="112" fill="#fff"/><filter id="hvt1" x="-5%" y="-5%" width="110%" height="110%"><feMorphology operator="dilate" radius="2.1 0.2"/></filter><g stroke="#fff" stroke-width="3.4" fill="#fff" style="font-family:'Liberation Sans',sans-serif;font-weight:bold;font-size:75px"><text transform="translate(473.4 317) scale(0.768 1)">PRODUCT</text><text transform="translate(473.3 375.8) scale(0.802 1)">NAME</text></g><text x="545.5" y="723.2" style="font-family:'Liberation Sans',sans-serif;font-weight:bold;font-size:46.5px;letter-spacing:-1.19px" fill="#595959" stroke="#595959" stroke-width="2.2">DESCRIPTION</text>
<text x="548" y="758" style="font-family:'Liberation Sans',sans-serif;font-size:17px" fill="#444" textLength="495" lengthAdjust="spacingAndGlyphs">Lorem ipsum dolor sit amet, consectetur adipiscing elit, sed do</text>
<text x="548" y="781.5" style="font-family:'Liberation Sans',sans-serif;font-size:17px" fill="#444" textLength="482" lengthAdjust="spacingAndGlyphs">eiusmod tempor incididunt ut labore et dolore magna aliqua.</text>
</svg>
<span class="t" style="left:9.50px;top:466.77px;font-size:16.5px;color:#444;letter-spacing:0.000px;">3</span>
<svg class="a" style="left:7px;top:484.7px" width="11" height="11" viewBox="0 0 11 11"><path d="M6 0.5L7.3 4.1H10.8L8 6.3L9 9.8L6 7.7L3 9.8L4 6.3L1.2 4.1H4.7Z" fill="#666"/><path d="M0 3.5H1.6M0.3 5.5H2" stroke="#888" stroke-width=".7"/></svg>
<div class="a" style="left:32px;top:470px;width:132px;height:132px;background:#D2D2D2;"></div>
<svg class="a" style="left:33px;top:471.00px;overflow:hidden" width="130" height="130.00" viewBox="444 167 647 646.00" preserveAspectRatio="none">
<rect x="444" y="167" width="647" height="646" fill="#fff"/>
<defs><linearGradient id="t2bg3" x1="444" x2="1091" y1="167" y2="813" gradientUnits="userSpaceOnUse"><stop offset="0" stop-color="#C9C7C8"/><stop offset="0.6" stop-color="#C8C6C7"/><stop offset="1" stop-color="#D6D4D4"/></linearGradient></defs><rect x="444" y="167" width="690" height="646" fill="url(#t2bg3)"/><g transform="translate(430.56 138.67) scale(0.8427 0.8414)"><ellipse cx="487" cy="278" rx="36" ry="30" fill="#5E2F22"/><path d="M200 560L300 470L400 365L440 322L470 335L500 400L545 420L585 455L602 520L590 600L548 624L400 640Z" fill="#A5BADB"/><path d="M400 365L440 322L470 335L482 400L430 405Z" fill="#BBCCE6"/><path d="M470 302L520 296L546 340L542 425L505 432L480 380Z" fill="#E6BDA9"/><path d="M430 405L440 600M505 432L545 600M330 470L380 560" stroke="#8DA4C9" stroke-width="5" fill="none" opacity=".7"/><path d="M540 430L585 460L600 520L588 598L560 610Z" fill="#B4C6E2"/></g>
<path d="M628.7 597.4L1091 710.7L1090.3 813.4L444.5 813.4L444.5 700Z" fill="#fff"/><path d="M880 174.2L1002.6 182.5L446 794.6L444 794Z" fill="#6FB6EA"/><path d="M443.3 160L978.4 164.5L444.2 794L443.3 794Z" fill="#217DBB"/><rect x="460.2" y="263" width="3.7" height="112" fill="#fff"/><filter id="hvt2" x="-5%" y="-5%" width="110%" height="110%"><feMorphology operator="dilate" radius="2.1 0.2"/></filter><g stroke="#fff" stroke-width="3.4" fill="#fff" style="font-family:'Liberation Sans',sans-serif;font-weight:bold;font-size:75px"><text transform="translate(473.4 317) scale(0.768 1)">PRODUCT</text><text transform="translate(473.3 375.8) scale(0.802 1)">NAME</text></g><text x="545.5" y="723.2" style="font-family:'Liberation Sans',sans-serif;font-weight:bold;font-size:46.5px;letter-spacing:-1.19px" fill="#595959" stroke="#595959" stroke-width="2.2">DESCRIPTION</text>
<text x="548" y="758" style="font-family:'Liberation Sans',sans-serif;font-size:17px" fill="#444" textLength="495" lengthAdjust="spacingAndGlyphs">Lorem ipsum dolor sit amet, consectetur adipiscing elit, sed do</text>
<text x="548" y="781.5" style="font-family:'Liberation Sans',sans-serif;font-size:17px" fill="#444" textLength="482" lengthAdjust="spacingAndGlyphs">eiusmod tempor incididunt ut labore et dolore magna aliqua.</text>
</svg>
<span class="t" style="left:9.50px;top:617.77px;font-size:16.5px;color:#444;letter-spacing:0.000px;">4</span>
<svg class="a" style="left:7px;top:635.7px" width="11" height="11" viewBox="0 0 11 11"><path d="M6 0.5L7.3 4.1H10.8L8 6.3L9 9.8L6 7.7L3 9.8L4 6.3L1.2 4.1H4.7Z" fill="#666"/><path d="M0 3.5H1.6M0.3 5.5H2" stroke="#888" stroke-width=".7"/></svg>
<div class="a" style="left:32px;top:621px;width:132px;height:132px;background:#D2D2D2;"></div>
<svg class="a" style="left:33px;top:622.00px;overflow:hidden" width="130" height="130.00" viewBox="444 167 647 646.00" preserveAspectRatio="none">
<rect x="444" y="167" width="647" height="646" fill="#fff"/>
<defs><linearGradient id="t3bg4" x1="444" x2="1091" y1="0" y2="0" gradientUnits="userSpaceOnUse"><stop offset="0" stop-color="#4E2B1E"/><stop offset=".7" stop-color="#5F3626"/><stop offset="1" stop-color="#4A2618"/></linearGradient></defs><rect x="444" y="167" width="690" height="646" fill="url(#t3bg4)"/><g transform="translate(430.56 137.43) scale(0.8427 0.8414)"><rect x="610" y="120" width="165" height="450" fill="#A9B3B4"/><rect x="650" y="150" width="60" height="380" fill="#C5CDD0"/><rect x="715" y="200" width="55" height="330" fill="#8FA2A6"/><rect x="600" y="120" width="30" height="450" fill="#7A5446"/><circle cx="720" cy="66" r="16" fill="#F6EBCB"/><circle cx="720" cy="66" r="26" fill="#F6EBCB" opacity=".35"/><path d="M490 300Q485 230 525 215Q565 225 560 300Z" fill="#3A1E14"/><path d="M200 600L275 500L330 420L420 340L470 302L575 288L612 330L660 420L725 470L730 502L640 545L565 585L550 640L200 640Z" fill="#EEE7DD"/><path d="M440 305L500 298L500 330L455 332Z" fill="#1E2440"/><path d="M560 500L640 520L575 575L548 600Z" fill="#5A3324"/><path d="M520 585L550 580L552 610L525 608Z" fill="#E6BDA9"/><path d="M430 340L420 600" stroke="#D9CFC2" stroke-width="6" fill="none"/></g>
<path d="M649.6 571.3L1091 707.4L1090.3 813.4L444.5 813.4L444.5 700Z" fill="#fff"/><path d="M880 174.2L1002.6 182.5L446 794.6L444 794Z" fill="#6FB6EA"/><path d="M443.3 160L978.4 164.5L444.2 794L443.3 794Z" fill="#217DBB"/><rect x="460.2" y="263" width="3.7" height="112" fill="#fff"/><filter id="hvt3" x="-5%" y="-5%" width="110%" height="110%"><feMorphology operator="dilate" radius="2.1 0.2"/></filter><g stroke="#fff" stroke-width="3.4" fill="#fff" style="font-family:'Liberation Sans',sans-serif;font-weight:bold;font-size:75px"><text transform="translate(473.4 317) scale(0.768 1)">PRODUCT</text><text transform="translate(473.3 375.8) scale(0.802 1)">NAME</text></g><text x="545.5" y="723.2" style="font-family:'Liberation Sans',sans-serif;font-weight:bold;font-size:46.5px;letter-spacing:-1.19px" fill="#595959" stroke="#595959" stroke-width="2.2">DESCRIPTION</text>
<text x="548" y="758" style="font-family:'Liberation Sans',sans-serif;font-size:17px" fill="#444" textLength="495" lengthAdjust="spacingAndGlyphs">Lorem ipsum dolor sit amet, consectetur adipiscing elit, sed do</text>
<text x="548" y="781.5" style="font-family:'Liberation Sans',sans-serif;font-size:17px" fill="#444" textLength="482" lengthAdjust="spacingAndGlyphs">eiusmod tempor incididunt ut labore et dolore magna aliqua.</text>
</svg>
<span class="t" style="left:9.50px;top:768.77px;font-size:16.5px;color:#444;letter-spacing:0.000px;">5</span>
<svg class="a" style="left:7px;top:786.7px" width="11" height="11" viewBox="0 0 11 11"><path d="M6 0.5L7.3 4.1H10.8L8 6.3L9 9.8L6 7.7L3 9.8L4 6.3L1.2 4.1H4.7Z" fill="#666"/><path d="M0 3.5H1.6M0.3 5.5H2" stroke="#888" stroke-width=".7"/></svg>
<div class="a" style="left:32px;top:772px;width:132px;height:132px;background:#D2D2D2;"></div>
<svg class="a" style="left:33px;top:773.00px;overflow:hidden" width="130" height="54.00" viewBox="444 167 647 268.34" preserveAspectRatio="none">
<rect x="444" y="167" width="647" height="646" fill="#fff"/>
<rect x="444" y="167" width="690" height="646" fill="#E4E6E8"/><g transform="translate(430.56 136.2) scale(0.4388 0.4382)"><rect x="1240" y="70" width="260" height="160" fill="#F1F2F3"/><path d="M900 700L930 520L990 430L1040 330L1100 320L1110 400L1120 520L1120 700Z" fill="#2E2C36"/><ellipse cx="1085" cy="350" rx="28" ry="32" fill="#26242A"/><path d="M1095 420L1170 400L1185 600L1120 620Z" fill="#F3F3F3"/><path d="M800 560L940 540L930 700L800 700Z" fill="#F0EEEE"/><path d="M1262 330Q1258 190 1340 182Q1420 190 1418 330L1440 440L1250 440Z" fill="#C8A67B"/><path d="M1290 250Q1335 225 1378 250L1376 340Q1335 395 1294 340Z" fill="#E8C4AC"/><circle cx="1303" cy="299" r="19" fill="#3A3C44"/><circle cx="1358" cy="299" r="19" fill="#3A3C44"/><path d="M1170 700L1200 470L1270 400L1410 400L1495 440L1500 700Z" fill="#EADBC8"/><path d="M1300 420L1420 420L1430 700L1310 700Z" fill="#F5F3F4"/><path d="M1330 520L1430 510L1430 560L1335 565Z" fill="#3A3550" opacity=".8"/><path d="M1295 440L1335 480L1300 500Z" fill="#D0283A"/><path d="M1260 590L1330 560L1400 580L1380 620L1280 625Z" fill="#E8C4AC"/></g>
<path d="M649.6 571.3L1091 707.4L1090.3 813.4L444.5 813.4L444.5 700Z" fill="#fff"/><path d="M880 174.2L1002.6 182.5L446 794.6L444 794Z" fill="#6FB6EA"/><path d="M443.3 160L978.4 164.5L444.2 794L443.3 794Z" fill="#217DBB"/><rect x="460.2" y="263" width="3.7" height="112" fill="#fff"/><filter id="hvt4" x="-5%" y="-5%" width="110%" height="110%"><feMorphology operator="dilate" radius="2.1 0.2"/></filter><g stroke="#fff" stroke-width="3.4" fill="#fff" style="font-family:'Liberation Sans',sans-serif;font-weight:bold;font-size:75px"><text transform="translate(473.4 317) scale(0.768 1)">PRODUCT</text><text transform="translate(473.3 375.8) scale(0.802 1)">NAME</text></g><text x="545.5" y="723.2" style="font-family:'Liberation Sans',sans-serif;font-weight:bold;font-size:46.5px;letter-spacing:-1.19px" fill="#595959" stroke="#595959" stroke-width="2.2">DESCRIPTION</text>
<text x="548" y="758" style="font-family:'Liberation Sans',sans-serif;font-size:17px" fill="#444" textLength="495" lengthAdjust="spacingAndGlyphs">Lorem ipsum dolor sit amet, consectetur adipiscing elit, sed do</text>
<text x="548" y="781.5" style="font-family:'Liberation Sans',sans-serif;font-size:17px" fill="#444" textLength="482" lengthAdjust="spacingAndGlyphs">eiusmod tempor incididunt ut labore et dolore magna aliqua.</text>
</svg>
<div class="a" style="left:443.5px;top:167px;width:647.5px;height:646.5px;background:#fff;border-left:1px solid #D0D0D0;box-sizing:border-box;"></div>
<svg class="a" style="left:430px;top:150px" width="720" height="677" viewBox="430 150 720 677">
<defs><linearGradient id="bg1" x1="444" x2="1134" y1="0" y2="0" gradientUnits="userSpaceOnUse"><stop offset="0" stop-color="#CDD0D3"/><stop offset="0.78" stop-color="#CACDD0"/><stop offset="0.87" stop-color="#C6C9CC"/><stop offset="0.935" stop-color="#BFC3C6"/><stop offset="1" stop-color="#BDC1C4"/></linearGradient><linearGradient id="bgt1" x1="0" x2="0" y1="167" y2="360" gradientUnits="userSpaceOnUse"><stop offset="0" stop-color="#BDC1C4" stop-opacity=".85"/><stop offset="1" stop-color="#BDC1C4" stop-opacity="0"/></linearGradient><linearGradient id="jk" x1="690" x2="1030" y1="0" y2="0" gradientUnits="userSpaceOnUse"><stop offset="0" stop-color="#9C2242"/><stop offset="0.3" stop-color="#A92849"/><stop offset="0.55" stop-color="#AE2B4C"/><stop offset="0.7" stop-color="#A32545"/><stop offset="1" stop-color="#A62747"/></linearGradient><filter id="bl1" x="-20%" y="-20%" width="140%" height="140%"><feGaussianBlur stdDeviation="4"/></filter><clipPath id="jc1"><path d="M600 640L700 480L800 395L847.7 359.8L864.7 364L886.5 362.7L901 365.9L911.9 371.5L919.1 379.2L918 393.7L934.9 415.5L959.4 440L987.7 480.9L1016 521.7L1027 540.6L1025.4 553.1L1012.8 581.4L987.7 619.1L965.7 647.4L951.6 668L900 700L600 700Z"/></clipPath></defs><rect x="444" y="167" width="690" height="646" fill="url(#bg1)"/><rect x="444" y="167" width="690" height="200" fill="url(#bgt1)"/><path d="M840 300L883 316L886.5 319Q884 328 888 337Q896 338 894 348Q892 354 887 354Q898 355 904 365L886 367L848 363Z" fill="#6B3822"/><path d="M862 332Q874 342 870 358M878 326Q883 340 879 352M889 340Q886 350 880 356" stroke="#A66A45" stroke-width="2.4" fill="none" opacity=".85"/><circle cx="890.5" cy="346" r="4.6" fill="none" stroke="#6B3822" stroke-width="2.6"/><path d="M892 357Q900 356 903 366" stroke="#6B3822" stroke-width="3" fill="none"/><path d="M600 640L700 480L800 395L847.7 359.8L864.7 364L886.5 362.7L901 365.9L911.9 371.5L919.1 379.2L918 393.7L934.9 415.5L959.4 440L987.7 480.9L1016 521.7L1027 540.6L1025.4 553.1L1012.8 581.4L987.7 619.1L965.7 647.4L951.6 668L900 700L600 700Z" fill="url(#jk)"/><g clip-path="url(#jc1)"><g filter="url(#bl1)"><path d="M905 484L887 507L871 534L863 566L865 591L873 619L850 615L845 560L858 515L885 480Z" fill="#861B39" opacity=".55"/><path d="M964 533L961 556L947 581L922 616L898 640L930 650L975 600L1000 560L990 535Z" fill="#8A1D3B" opacity=".25"/><path d="M925 390L960 440L1016 521L1027 541L1012 536L965 470L925 415Z" fill="#BE3659" opacity=".55"/><path d="M700 500L745 470L760 540L740 600L700 600Z" fill="#8A1D3B" opacity=".35"/><path d="M815 440L850 445L840 560L815 570Z" fill="#B83254" opacity=".45"/></g></g><path d="M904.4 484L934.3 506L964.1 532.7L961 556.3L946.9 581.4L921.7 616L898.1 641L879.3 633L873 619.1L865.1 590.8L863.6 565.7L871.4 534.3L887.1 507.6Z" fill="#C9CCCF"/><path d="M828 618Q856 612 874 620L881 629L899 641L890 655L830 640Z" fill="#E0A694"/><path d="M838 626Q860 622 878 632" stroke="#C98674" stroke-width="1.2" fill="none"/><path d="M882.2 437Q892 434 906 417M882.2 437Q862 470 846 524" stroke="#8A1D3B" stroke-width="1.1" fill="none" opacity=".75"/><path d="M810 400L810 425L804 461" stroke="#8A1D3B" stroke-width="1" fill="none" opacity=".6"/><path d="M834 429.8L882.2 436.9" stroke="#EBCFA8" stroke-width="1.9"/><path d="M735 455L800 385L810.4 394.4L809.7 425.3L803.9 461.5L796.6 486.9L802.1 514.1L785 528.6L769.8 538.4L755.3 521.3L753.1 503.2L745.9 476L748.8 463.3Z" fill="#F6F6F7"/><path d="M752 470Q775 458 803 452M750 486Q775 476 797 486M756 506Q778 494 800 510M770 445Q790 440 806 430" stroke="#D3D4D8" stroke-width="2.2" fill="none"/><path d="M757 520Q772 512 790 524" stroke="#C5C6CB" stroke-width="1.6" fill="none"/><path d="M699.8 512.5L704.5 519.5L707 548L703.5 581L698 577.5L701.6 548Z" fill="#D2D2D6"/><circle cx="769.8" cy="561.5" r="8.6" fill="#9F2343" stroke="#861B39" stroke-width="1"/><path d="M764 556Q769 552 775 556" stroke="#B93457" stroke-width="1.3" fill="none"/><path d="M813.3 577L863 577L872 614L817.7 618.2Z" fill="#A62747" stroke="#851A38" stroke-width="1"/><path d="M813.3 580L863.5 580" stroke="#7F1835" stroke-width="1.6" opacity=".7"/><path d="M703.5 575.7L739.7 577.5L741.5 590" fill="none" stroke="#851A38" stroke-width="1.2"/><path d="M771 539Q777 550 779.6 574L783.2 614" stroke="#851A38" stroke-width="1" fill="none"/>
<path d="M444.5 813.9H1091" stroke="#BDBDBD" stroke-width="1"/>
<path d="M649.6 571.3L1091 707.4L1090.3 813.4L444.5 813.4L444.5 700Z" fill="#fff"/><path d="M880 174.2L1002.6 182.5L446 794.6L444 794Z" fill="#6FB6EA"/><path d="M443.3 160L978.4 164.5L444.2 794L443.3 794Z" fill="#217DBB"/><rect x="460.2" y="263" width="3.7" height="112" fill="#fff"/><filter id="hvm0" x="-5%" y="-5%" width="110%" height="110%"><feMorphology operator="dilate" radius="1.7 0"/></filter><g filter="url(#hvm0)" fill="#fff" style="font-family:'Liberation Sans',sans-serif;font-weight:bold;font-size:75px"><text transform="translate(473.4 317) scale(0.768 1)">PRODUCT</text><text transform="translate(473.3 375.8) scale(0.802 1)">NAME</text></g><text x="545.5" y="723.2" style="font-family:'Liberation Sans',sans-serif;font-weight:bold;font-size:46.5px;letter-spacing:-1.19px" fill="#595959" >DESCRIPTION</text>
<path d="M439 506L443.4 506L443.4 722Z" fill="#fff"/>
</svg>
<span class="t" style="left:548px;top:743.47px;font-size:18.5px;color:#404040;letter-spacing:-0.254px"><span style="text-decoration:underline wavy #E8483A 1px;text-underline-offset:1.5px;">Lorem</span> <span style="text-decoration:underline wavy #E8483A 1px;text-underline-offset:1.5px;">ipsum</span> dolor sit <span style="text-decoration:underline wavy #E8483A 1px;text-underline-offset:1.5px;">amet</span>, <span style="text-decoration:underline wavy #E8483A 1px;text-underline-offset:1.5px;">consectetur</span> <span style="text-decoration:underline wavy #E8483A 1px;text-underline-offset:1.5px;">adipiscing</span> <span style="text-decoration:underline wavy #E8483A 1px;text-underline-offset:1.5px;">elit</span>, <span style="text-decoration:underline wavy #E8483A 1px;text-underline-offset:1.5px;">sed</span> do</span>
<span class="t" style="left:548px;top:766.97px;font-size:18.5px;color:#404040;letter-spacing:-0.165px"><span style="text-decoration:underline wavy #E8483A 1px;text-underline-offset:1.5px;">eiusmod</span> <span style="text-decoration:underline wavy #E8483A 1px;text-underline-offset:1.5px;">tempor</span> <span style="text-decoration:underline wavy #E8483A 1px;text-underline-offset:1.5px;">incididunt</span> <span style="text-decoration:underline wavy #E8483A 1px;text-underline-offset:1.5px;">ut</span> <span style="text-decoration:underline wavy #E8483A 1px;text-underline-offset:1.5px;">labore</span> et <span style="text-decoration:underline wavy #E8483A 1px;text-underline-offset:1.5px;">dolore</span> magna <span style="text-decoration:underline wavy #E8483A 1px;text-underline-offset:1.5px;">aliqua</span>.</span>
<svg class="a" style="left:1128px;top:165px" width="60" height="56" viewBox="1128 165 60 56">
<defs><linearGradient id="spk" x1="0" x2="0.6" y1="0" y2="1"><stop offset="0" stop-color="#CFCFCF"/><stop offset="1" stop-color="#9A9A9C"/></linearGradient>
<filter id="spsh" x="-20%" y="-20%" width="150%" height="150%"><feGaussianBlur stdDeviation="0.9"/></filter></defs>
<g transform="translate(0.8 1)" filter="url(#spsh)" opacity=".45" stroke="#8a8a8a" stroke-width="4.2" stroke-linejoin="round" stroke-linecap="round" fill="#8a8a8a"><path d="M1134.6 186.4H1142.6L1157.2 175.2V209.6L1142.6 198.2H1134.6Z"/><path d="M1166.4 176.9L1170.7 171.4M1171.1 183.6L1177.4 180.8M1173 192.4H1180.1M1171.1 201.3L1177.4 204M1166.4 207.9L1170.7 213.4"/></g>
<g stroke="#F6F6F6" stroke-width="4.4" stroke-linejoin="round" stroke-linecap="round" fill="#F6F6F6"><path d="M1134.6 186.4H1142.6L1157.2 175.2V209.6L1142.6 198.2H1134.6Z" stroke-width="3"/><path d="M1166.4 176.9L1170.7 171.4M1171.1 183.6L1177.4 180.8M1173 192.4H1180.1M1171.1 201.3L1177.4 204M1166.4 207.9L1170.7 213.4"/></g>
<path d="M1134.6 186.4H1142.6L1157.2 175.2V209.6L1142.6 198.2H1134.6Z" fill="url(#spk)"/>
<g stroke="#A2A2A3" stroke-width="2.1" stroke-linecap="round"><path d="M1166.4 176.9L1170.7 171.4M1171.1 183.6L1177.4 180.8M1173 192.4H1180.1M1171.1 201.3L1177.4 204M1166.4 207.9L1170.7 213.4"/></g></svg>
<div class="a" style="left:1331px;top:151px;width:15px;height:606px;background:#DBDBDB;"></div>
<div class="a" style="left:1331px;top:151px;width:15px;height:15px;background:#fff;border:1px solid #ABABAB;box-sizing:border-box;"></div>
<svg class="a" style="left:1335px;top:156px" width="7" height="4"><path d="M0 4H7L3.5 0Z" fill="#777"/></svg>
<div class="a" style="left:1331px;top:166px;width:15px;height:83px;background:#fff;border:1px solid #ABABAB;box-sizing:border-box;"></div>
<div class="a" style="left:1331px;top:756px;width:15px;height:15px;background:#fff;border:1px solid #C6C6C6;box-sizing:border-box;"></div>
<svg class="a" style="left:1335px;top:762px" width="7" height="4"><path d="M0 0H7L3.5 4Z" fill="#666"/></svg>
<svg class="a" style="left:1334.5px;top:775.5px" width="8" height="27" viewBox="0 0 8 27"><path d="M0 4.2H8L4 0ZM0 8.6H8L4 4.4Z M0 18.2H8L4 22.4ZM0 22.6H8L4 26.8Z" fill="#666"/></svg>
<div class="a" style="left:1347px;top:151px;width:1px;height:676px;background:#B4B4B4;"></div>
<span class="t" style="left:1361.70px;top:166.27px;font-size:21.5px;color:#B5472C;letter-spacing:-0.916px;">Selezione</span>
<svg class="a" style="left:1526.5px;top:170.5px" width="10" height="5"><path d="M0 0H10L5 4.6Z" fill="#555"/></svg>
<svg class="a" style="left:1567px;top:167px" width="12" height="12" viewBox="0 0 12 12"><path d="M1.2 1.2L10.8 10.8M10.8 1.2L1.2 10.8" stroke="#444" stroke-width="1.8"/></svg>
<div class="a" style="left:1361px;top:196px;width:84px;height:23.3px;background:#fff;border:1px solid #ABABAB;box-sizing:border-box;"></div>
<div class="a" style="left:1448.5px;top:196px;width:96px;height:23.3px;background:#fff;border:1px solid #ABABAB;box-sizing:border-box;"></div>
<span class="t" style="left:1370.00px;top:201.02px;font-size:12px;color:#333;letter-spacing:0.240px;">Mostra tutto</span>
<span class="t" style="left:1457.00px;top:201.02px;font-size:12px;color:#333;letter-spacing:0.191px;">Nascondi tutto</span>
<div class="a" style="left:1546px;top:223px;width:17px;height:14px;background:#fff;border:1px solid #ABABAB;box-sizing:border-box;"></div>
<div class="a" style="left:1566px;top:223px;width:17px;height:14px;background:#fff;border:1px solid #ABABAB;box-sizing:border-box;"></div>
<svg class="a" style="left:1550px;top:227.2px" width="9" height="5"><path d="M0 5H9L4.5 0Z" fill="#777"/></svg>
<svg class="a" style="left:1570px;top:228.1px" width="9" height="5"><path d="M0 0H9L4.5 5Z" fill="#666"/></svg>
<span class="t" style="left:1381.50px;top:255.02px;font-size:12px;color:#3A3A3A;letter-spacing:-0.191px;">Free Corporate Backgroun...</span>
<svg class="a" style="left:1539px;top:254.2px" width="19" height="13" viewBox="0 0 19 13" fill="none" stroke="#3C3C3C" stroke-width="1.15"><path d="M1.2 7.9A8 8 0 0 1 16.7 7.9"/><circle cx="8.95" cy="7.9" r="2.65"/></svg>
<span class="t" style="left:1381.50px;top:274.02px;font-size:12px;color:#3A3A3A;letter-spacing:-0.334px;">Rectangle 4</span>
<svg class="a" style="left:1539px;top:273.2px" width="19" height="13" viewBox="0 0 19 13" fill="none" stroke="#3C3C3C" stroke-width="1.15"><path d="M1.2 7.9A8 8 0 0 1 16.7 7.9"/><circle cx="8.95" cy="7.9" r="2.65"/></svg>
<span class="t" style="left:1381.50px;top:293.02px;font-size:12px;color:#3A3A3A;letter-spacing:-0.296px;">TextBox 12</span>
<svg class="a" style="left:1539px;top:292.2px" width="19" height="13" viewBox="0 0 19 13" fill="none" stroke="#3C3C3C" stroke-width="1.15"><path d="M1.2 7.9A8 8 0 0 1 16.7 7.9"/><circle cx="8.95" cy="7.9" r="2.65"/></svg>
<span class="t" style="left:1381.50px;top:312.02px;font-size:12px;color:#3A3A3A;letter-spacing:-0.224px;">TextBox 9</span>
<svg class="a" style="left:1539px;top:311.3px" width="19" height="13" viewBox="0 0 19 13" fill="none" stroke="#3C3C3C" stroke-width="1.15"><path d="M1.2 7.9A8 8 0 0 1 16.7 7.9"/><circle cx="8.95" cy="7.9" r="2.65"/></svg>
<span class="t" style="left:1381.50px;top:331.02px;font-size:12px;color:#3A3A3A;letter-spacing:-0.361px;">Isosceles Triangle 3</span>
<svg class="a" style="left:1539px;top:330.3px" width="19" height="13" viewBox="0 0 19 13" fill="none" stroke="#3C3C3C" stroke-width="1.15"><path d="M1.2 7.9A8 8 0 0 1 16.7 7.9"/><circle cx="8.95" cy="7.9" r="2.65"/></svg>
<span class="t" style="left:1381.50px;top:350.02px;font-size:12px;color:#3A3A3A;letter-spacing:-0.296px;">TextBox 20</span>
<svg class="a" style="left:1539px;top:349.3px" width="19" height="13" viewBox="0 0 19 13" fill="none" stroke="#3C3C3C" stroke-width="1.15"><path d="M1.2 7.9A8 8 0 0 1 16.7 7.9"/><circle cx="8.95" cy="7.9" r="2.65"/></svg>
<span class="t" style="left:1381.50px;top:369.02px;font-size:12px;color:#3A3A3A;letter-spacing:-0.296px;">TextBox 19</span>
<svg class="a" style="left:1539px;top:368.3px" width="19" height="13" viewBox="0 0 19 13" fill="none" stroke="#3C3C3C" stroke-width="1.15"><path d="M1.2 7.9A8 8 0 0 1 16.7 7.9"/><circle cx="8.95" cy="7.9" r="2.65"/></svg>
<span class="t" style="left:1381.50px;top:388.02px;font-size:12px;color:#3A3A3A;letter-spacing:-0.361px;">Isosceles Triangle 3</span>
<svg class="a" style="left:1539px;top:387.3px" width="19" height="13" viewBox="0 0 19 13" fill="none" stroke="#3C3C3C" stroke-width="1.15"><path d="M1.2 7.9A8 8 0 0 1 16.7 7.9"/><circle cx="8.95" cy="7.9" r="2.65"/></svg>
<span class="t" style="left:1381.50px;top:407.02px;font-size:12px;color:#3A3A3A;letter-spacing:-0.334px;">Rectangle 5</span>
<svg class="a" style="left:1539px;top:406.4px" width="19" height="13" viewBox="0 0 19 13" fill="none" stroke="#3C3C3C" stroke-width="1.15"><path d="M1.2 7.9A8 8 0 0 1 16.7 7.9"/><circle cx="8.95" cy="7.9" r="2.65"/></svg>
<span class="t" style="left:1381.50px;top:426.02px;font-size:12px;color:#3A3A3A;letter-spacing:-0.182px;">Picture 8</span>
<svg class="a" style="left:1539px;top:425.4px" width="19" height="13" viewBox="0 0 19 13" fill="none" stroke="#3C3C3C" stroke-width="1.15"><path d="M1.2 7.9A8 8 0 0 1 16.7 7.9"/><circle cx="8.95" cy="7.9" r="2.65"/></svg>
</body></html>
